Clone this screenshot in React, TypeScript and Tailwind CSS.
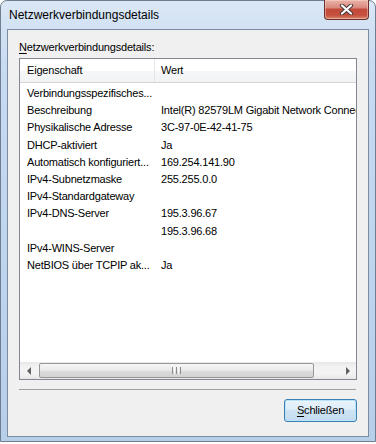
const rows: [string, string][] = [
  ["Verbindungsspezifisches...", ""],
  ["Beschreibung", "Intel(R) 82579LM Gigabit Network Connection"],
  ["Physikalische Adresse", "3C-97-0E-42-41-75"],
  ["DHCP-aktiviert", "Ja"],
  ["Automatisch konfiguriert...", "169.254.141.90"],
  ["IPv4-Subnetzmaske", "255.255.0.0"],
  ["IPv4-Standardgateway", ""],
  ["IPv4-DNS-Server", "195.3.96.67"],
  ["", "195.3.96.68"],
  ["IPv4-WINS-Server", ""],
  ["NetBIOS über TCPIP ak...", "Ja"],
];

function CloseButton() {
  return (
    <div className="-mt-px flex h-[20px] w-[45px] items-center justify-center rounded-b-[4px] border border-t-0 border-[#6a3029] bg-[linear-gradient(#ebb3a9,#d98a7e_40%,#c44a3a_50%,#c5503e_80%,#dc8a6e)] shadow-[inset_0_0_0_1px_rgba(255,220,210,0.45)]">
      <svg width="15" height="11" viewBox="0 0 15 11">
        <path d="M3 1.5 L12 9.5 M12 1.5 L3 9.5" stroke="#4a3a3a" strokeWidth="4.2" strokeLinecap="round" fill="none" />
        <path d="M3 1.5 L12 9.5 M12 1.5 L3 9.5" stroke="#ffffff" strokeWidth="2.2" strokeLinecap="round" fill="none" />
      </svg>
    </div>
  );
}

function HScrollbar() {
  return (
    <div className="flex h-[17px] shrink-0 items-center bg-[linear-gradient(#e8e8e8,#f3f3f3_30%,#f3f3f3_70%,#e6e6e6)]">
      <div className="flex h-full w-[17px] items-center justify-center">
        <div className="h-0 w-0 border-y-[4px] border-r-[4px] border-y-transparent border-r-[#606060]" />
      </div>
      <div className="ml-[2px] flex h-[15px] w-[275px] items-center justify-center rounded-[2px] border border-[#979797] bg-[linear-gradient(#f6f6f6,#e9e9e9_50%,#dcdcdc_50%,#d4d4d4)]">
        <div className="flex gap-[1px]">
          <div className="h-[7px] w-[1px] bg-[#8c8c8c]" />
          <div className="h-[7px] w-[1px] bg-[#fafafa]" />
          <div className="h-[7px] w-[1px] bg-[#8c8c8c]" />
          <div className="h-[7px] w-[1px] bg-[#fafafa]" />
          <div className="h-[7px] w-[1px] bg-[#8c8c8c]" />
        </div>
      </div>
      <div className="flex-1" />
      <div className="flex h-full w-[17px] items-center justify-center">
        <div className="h-0 w-0 border-y-[4px] border-l-[4px] border-y-transparent border-l-[#606060]" />
      </div>
    </div>
  );
}

export default function App() {
  return (
    <div className="h-[444px] w-[376px] bg-white font-['Liberation_Sans',Arial,sans-serif] text-black">
      <div className="flex h-[442px] w-[376px] flex-col rounded-t-[7px] border border-[#6f7e90] bg-[linear-gradient(#dae7f6,#c7dbf1_15%,#bfd5ee_60%,#b7cfe9)] px-[6px] pb-[4px]">
        {/* Title bar */}
        <div className="flex h-[28px] items-start justify-between">
          <span className="mt-[7px] pl-[2px] text-[12px] leading-[15px]">Netzwerkverbindungsdetails</span>
          <CloseButton />
        </div>

        {/* Client area */}
        <div className="flex flex-1 flex-col border border-[#7b8ba0] bg-[#f0f0f0] px-[11px] pt-[10px] pb-[14px] text-[11px] tracking-[-0.2px]">
          <div className="h-[14px] leading-[14px]">
            <span className="underline underline-offset-[2px]">N</span>etzwerkverbindungsdetails:
          </div>

          <div className="mt-[4px] flex h-[322px] flex-col overflow-hidden border border-[#828790] bg-white">
            {/* Header */}
            <div className="flex h-[24px] shrink-0 border-b border-[#d5d5d5] bg-[linear-gradient(#ffffff,#ffffff_50%,#f6f7f8_50%,#f2f3f5)]">
              <div className="flex w-[134px] items-center pl-[7px]">Eigenschaft</div>
              <div className="w-px bg-[#e3e6ea]" />
              <div className="flex items-center pl-[6px]">Wert</div>
            </div>

            {/* Rows */}
            <div className="flex-1 pt-[2px]">
              {rows.map(([name, value], i) => (
                <div key={i} className="flex h-[17.2px] items-center whitespace-nowrap leading-[17px]">
                  <div className="w-[135px] shrink-0 overflow-hidden pl-[7px]">{name}</div>
                  <div className="pl-[6px]">{value}</div>
                </div>
              ))}
            </div>

            <HScrollbar />
          </div>

          <div className="mt-[9px] h-px w-[337px] bg-[#a0a0a0]" />

          <div className="mt-[9px] flex justify-end">
            <button className="flex h-[23px] w-[73px] items-center justify-center rounded-[3px] border border-[#3c7fb1] bg-[linear-gradient(#eaf4fb,#dcecf8_50%,#cde3f3_50%,#c4dcef)] shadow-[inset_0_0_0_1px_#b9e3f8]">
              <span>
                <span className="underline underline-offset-[2px]">S</span>chließen
              </span>
            </button>
          </div>
        </div>
      </div>
    </div>
  );
}
